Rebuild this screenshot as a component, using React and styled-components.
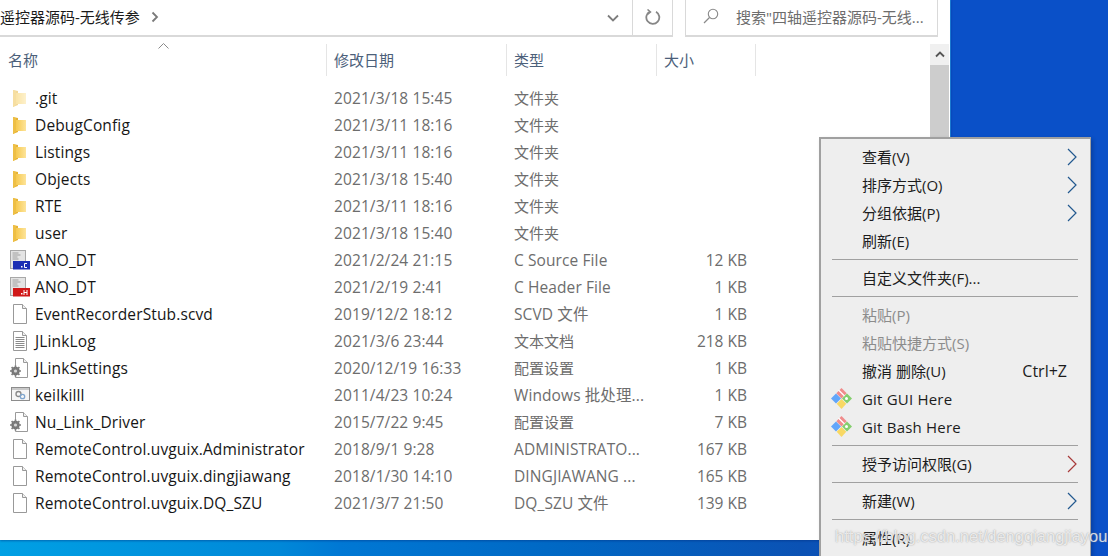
import React from "react";
import styled, { createGlobalStyle } from "styled-components";

const FONT = `"Open Sans", "Noto Sans CJK SC", sans-serif`;

const Global = createGlobalStyle`
  html, body { margin: 0; padding: 0; background: #0a50c8; overflow: hidden; }
  * { box-sizing: border-box; }
`;

const Desktop = styled.div`
  position: relative;
  width: 1108px;
  height: 556px;
  overflow: hidden;
  font-family: ${FONT};
  background: linear-gradient(90deg, #00a0e4 0, #0088d8 280px, #0078d4 340px, #0068c4 560px, #0b52b4 800px, #0a50c8 950px);
`;

const Explorer = styled.div`
  width: 951px;
  height: 540px;
  background: #fff;
  border-right: 1px solid #1a78d0;
  box-shadow: 0 1px 2px rgba(0, 40, 120, .45);
  display: flex;
  flex-direction: column;
  overflow: hidden;
`;

const AddressRow = styled.div`
  height: 37px;
  flex: none;
  display: flex;
  align-items: stretch;
`;

const AddressBox = styled.div`
  width: 673px;
  flex: none;
  display: flex;
  align-items: center;
  border-right: 1px solid #d9d9d9;
  border-bottom: 2px solid #d9d9d9;
`;

const Crumb = styled.div`
  font-size: 15px;
  color: #1a1a1a;
  white-space: nowrap;
  padding-bottom: 3px;
`;

const CrumbArrow = styled.svg`
  width: 8px;
  height: 12px;
  margin-left: 11px;
  margin-bottom: 2px;
`;

const Spacer = styled.div`
  flex: 1;
`;

const DropButton = styled.div`
  width: 40px;
  height: 100%;
  display: flex;
  align-items: center;
  justify-content: center;
  border-right: 1px solid #d9d9d9;
`;

const RefreshButton = styled.div`
  width: 39px;
  height: 100%;
  display: flex;
  align-items: center;
  justify-content: center;
`;

const SearchBox = styled.div`
  width: 253px;
  margin-left: 12px;
  flex: none;
  display: flex;
  align-items: center;
  border-left: 1px solid #d9d9d9;
  border-right: 1px solid #d9d9d9;
  border-bottom: 2px solid #d9d9d9;
  padding: 0 0 3px 17px;
  color: #6d6d6d;
  font-size: 15px;
  white-space: nowrap;
`;

const SearchText = styled.span`
  margin-left: 17px;
`;

const Body = styled.div`
  flex: 1;
  min-height: 0;
  display: flex;
  padding-top: 7px;
`;

const ListPane = styled.div`
  width: 930px;
  flex: none;
  position: relative;
`;

const HeaderRow = styled.div`
  display: grid;
  grid-template-columns: 327px 180px 150px 99px;
  height: 32px;
  margin-bottom: 8px;
`;

const HeaderCell = styled.div`
  font-size: 15px;
  color: #4c607a;
  padding-left: 7px;
  line-height: 32px;
  border-right: 1px solid #e5e5e5;
  &:first-child { padding-left: 8px; }
`;

const SortCaret = styled.svg`
  position: absolute;
  left: 158px;
  top: -1px;
  width: 11px;
  height: 6px;
`;

const FileRow = styled.div`
  display: grid;
  grid-template-columns: 327px 180px 150px 90px;
  height: 27px;
  align-items: center;
  font-size: 15.5px;
  white-space: nowrap;
`;

const NameCell = styled.div`
  display: flex;
  align-items: center;
  color: #161616;
  letter-spacing: .13px;
`;

const IconSlot = styled.div`
  width: 35px;
  flex: none;
  display: flex;
  justify-content: flex-start;
  padding-left: 10px;
  letter-spacing: 0;
`;

const MetaCell = styled.div`
  color: #6d6d6d;
  padding-left: 7px;
  font-size: ${p => (p.$cjk ? "15px" : "15.5px")};
  letter-spacing: ${p => (p.$cjk ? "0" : ".1px")};
  overflow: hidden;
`;

const SizeCell = styled.div`
  color: #6d6d6d;
  text-align: right;
  font-size: 15.5px;
`;

const ScrollTrack = styled.div`
  width: 19px;
  flex: none;
  background: #f0f0f0;
  display: flex;
  flex-direction: column;
`;

const ScrollUp = styled.div`
  height: 21px;
  display: flex;
  align-items: center;
  justify-content: center;
`;

const ScrollThumb = styled.div`
  flex: 1;
  background: #cdcdcd;
`;

const Menu = styled.div`
  position: absolute;
  left: 819px;
  top: 137px;
  width: 272px;
  height: 430px;
  background: #eeeeee;
  border: 2px solid #a0a0a0;
  border-right-width: 1px;
  padding-top: 4px;
  color: #1c1c1c;
  font-size: 15px;
  box-shadow: 2px 2px 4px rgba(0,0,0,.2);
`;

const MenuItem = styled.div`
  position: relative;
  height: 28px;
  display: flex;
  align-items: center;
  padding: 0 13px 2px 41px;
  color: ${p => (p.$disabled ? "#8c8c8c" : "#1c1c1c")};
  white-space: nowrap;
`;

const MenuIcon = styled.svg`
  position: absolute;
  left: 10px;
  top: 3px;
  width: 21px;
  height: 21px;
`;

const MenuLabel = styled.span`
  flex: 1;
  letter-spacing: ${p => (p.$latin ? ".2px" : "0")};
  padding-top: ${p => (p.$latin ? "2px" : "0")};
`;

const Shortcut = styled.span`
  padding-right: 10px;
  padding-top: 1px;
  font-size: 16px;
`;

const Chevron = styled.svg`
  width: 10px;
  height: 18px;
  margin-top: 2px;
`;

const MenuDivider = styled.div`
  height: 1px;
  background: #a0a0a0;
  margin: 4px 12px 4px 11px;
`;

const Watermark = styled.div`
  position: absolute;
  left: 835px;
  top: 527px;
  font-family: "Liberation Sans", sans-serif;
  font-size: 16.5px;
  color: rgba(255,255,255,.75);
  white-space: nowrap;
  text-shadow: 0 0 1.5px rgba(120,120,120,.8);
`;

function Folder({ faded }) {
  return (
    <svg width="13" height="18" viewBox="0 0 13 18" style={{ marginLeft: 3, opacity: faded ? 0.5 : 1 }}>
      <defs>
        <linearGradient id="folderFace" x1="0" x2="1" y1="0" y2="0">
          <stop offset="0" stopColor="#f6c94f" />
          <stop offset="1" stopColor="#fde49a" />
        </linearGradient>
      </defs>
      <path d="M0 1l5 1v14l-5 2z" fill="#e6b335" />
      <path d="M3 4h10v11H3z" fill="url(#folderFace)" />
      <path d="M0 1l3 1v14l-3 2z" fill="#eebf45" />
    </svg>
  );
}

function PageShape({ children }) {
  return (
    <svg width="17" height="20" viewBox="0 0 17 20">
      <path d="M3.500.5h9l4 4v15h-13z" fill="#fff" stroke="#999" />
      <path d="M12.500.5v4h4" fill="#f0f0f0" stroke="#999" />
      {children}
    </svg>
  );
}

const Blank = () => <PageShape />;

const TextDoc = () => (
  <PageShape>
    <path d="M5.500 6.500h9M5.500 8.500h9M5.500 10.500h9M5.500 12.500h9M5.500 14.500h9M5.500 16.500h9" stroke="#8a8a8a" strokeWidth="1" />
  </PageShape>
);

function Settings() {
  return (
    <svg width="18" height="20" viewBox="0 0 18 20">
      <path d="M5.500.5h8l4 4v15h-12z" fill="#fff" stroke="#9a9a9a" />
      <path d="M13.500.5v4h4" fill="#f0f0f0" stroke="#9a9a9a" />
      <circle cx="5.500" cy="13" r="4.200" fill="#6e6e6e" />
      <path d="M5.500 7.500v11M0 13h11M1.600 9.100l7.800 7.800M9.400 9.100l-7.800 7.800" stroke="#7d7d7d" strokeWidth="1.700" />
      <circle cx="5.500" cy="13" r="1.600" fill="#d8d8d8" />
    </svg>
  );
}

function Batch() {
  return (
    <svg width="19" height="15" viewBox="0 0 19 15" style={{ marginLeft: 1 }}>
      <rect x=".5" y=".5" width="18" height="13" fill="#f6f6f6" stroke="#8c8c8c" />
      <rect x="1" y="1" width="17" height="2" fill="#c9c9c9" />
      <circle cx="7.500" cy="7" r="2.500" fill="none" stroke="#888" strokeWidth="1.300" />
      <circle cx="11.500" cy="9.500" r="2.200" fill="none" stroke="#7fa6cf" strokeWidth="1.300" />
    </svg>
  );
}

function Source({ color, letter }) {
  return (
    <svg width="20" height="20" viewBox="0 0 20 20">
      <rect x=".5" y=".5" width="15" height="18" fill="#e4e4e4" stroke="#a8a8a8" />
      <path d="M2.500 3h6M2.500 5h8M2.500 7h5M2.500 9h6" stroke="#a0a0a0" strokeWidth="1" />
      <rect x="3" y="11" width="17" height="8.500" fill={color} />
      <rect x="11" y="16" width="1.500" height="1.500" fill="#fff" />
      <path d={letter === "C" ? "M17 13.500h-2.500v4H17" : "M14 13v5M17 13v5M14 15.500h3"} stroke="#fff" fill="none" strokeWidth="1" />
    </svg>
  );
}

const Git = () => (
  <MenuIcon viewBox="0 0 21 21">
    <path d="M10.500 0l5.200 5.200-5.200 5.200-5.200-5.200z" fill="#f08c8c" />
    <path d="M5 5.500l5 5-5 5L0 10.500z" fill="#62a6fa" />
    <path d="M16 5.500l5 5-5 5-5-5z" fill="#84cf6e" />
    <path d="M10.500 11l4.800 4.800-4.800 5.200-4.800-5.200z" fill="#f8d864" />
    <path d="M7.500 2l6 6" stroke="#fff" strokeWidth="1.300" />
    <circle cx="15.500" cy="10.500" r="1.500" fill="#fff" />
  </MenuIcon>
);

const ArrowRight = ({ color = "#22598f" }) => (
  <Chevron viewBox="0 0 10 18">
    <path d="M1 1l8 8-8 8" fill="none" stroke={color} strokeWidth="1.200" />
  </Chevron>
);

const files = [
  [<Folder faded />, ".git", "2021/3/18 15:45", "文件夹", ""],
  [<Folder />, "DebugConfig", "2021/3/11 18:16", "文件夹", ""],
  [<Folder />, "Listings", "2021/3/11 18:16", "文件夹", ""],
  [<Folder />, "Objects", "2021/3/18 15:40", "文件夹", ""],
  [<Folder />, "RTE", "2021/3/11 18:16", "文件夹", ""],
  [<Folder />, "user", "2021/3/18 15:40", "文件夹", ""],
  [<Source color="#1c2fb4" letter="C" />, "ANO_DT", "2021/2/24 21:15", "C Source File", "12 KB"],
  [<Source color="#d01818" letter="H" />, "ANO_DT", "2021/2/19 2:41", "C Header File", "1 KB"],
  [<Blank />, "EventRecorderStub.scvd", "2019/12/2 18:12", "SCVD 文件", "1 KB"],
  [<TextDoc />, "JLinkLog", "2021/3/6 23:44", "文本文档", "218 KB"],
  [<Settings />, "JLinkSettings", "2020/12/19 16:33", "配置设置", "1 KB"],
  [<Batch />, "keilkilll", "2011/4/23 10:24", "Windows 批处理...", "1 KB"],
  [<Settings />, "Nu_Link_Driver", "2015/7/22 9:45", "配置设置", "7 KB"],
  [<Blank />, "RemoteControl.uvguix.Administrator", "2018/9/1 9:28", "ADMINISTRATO...", "167 KB"],
  [<Blank />, "RemoteControl.uvguix.dingjiawang", "2018/1/30 14:10", "DINGJIAWANG ...", "165 KB"],
  [<Blank />, "RemoteControl.uvguix.DQ_SZU", "2021/3/7 21:50", "DQ_SZU 文件", "139 KB"],
];

const isCjkOnly = text => !/[A-Za-z0-9]/.test(text);

export default function App() {
  return (
    <Desktop>
      <Global />
      <Explorer>
        <AddressRow>
          <AddressBox>
            <Crumb>遥控器源码-无线传参</Crumb>
            <CrumbArrow viewBox="0 0 8 12">
              <path d="M1.500 1.500l4.500 4.500-4.500 4.500" fill="none" stroke="#7a7a7a" strokeWidth="1.800" />
            </CrumbArrow>
            <Spacer />
            <DropButton>
              <svg width="12" height="8" viewBox="0 0 12 8">
                <path d="M1 1.500l5 5 5-5" fill="none" stroke="#7d7d7d" strokeWidth="1.800" />
              </svg>
            </DropButton>
            <RefreshButton>
              <svg width="16" height="17" viewBox="0 0 16 17">
                <path d="M5 2.500a6.500 6.500 0 1 0 6 .2" fill="none" stroke="#868686" strokeWidth="1.800" />
                <path d="M2.500 .5l3 2.500-3 2.500" fill="none" stroke="#868686" strokeWidth="1.500" />
              </svg>
            </RefreshButton>
          </AddressBox>
          <SearchBox>
            <svg width="16" height="16" viewBox="0 0 16 16">
              <circle cx="10" cy="6" r="4.700" fill="none" stroke="#8a8a8a" strokeWidth="1.100" />
              <path d="M6.500 9.500L1 15" stroke="#8a8a8a" strokeWidth="1.200" />
            </svg>
            <SearchText>搜索"四轴遥控器源码-无线...</SearchText>
          </SearchBox>
        </AddressRow>
        <Body>
          <ListPane>
            <SortCaret viewBox="0 0 11 6">
              <path d="M.5 5.500l5-5 5 5" fill="none" stroke="#8a8a8a" />
            </SortCaret>
            <HeaderRow>
              <HeaderCell>名称</HeaderCell>
              <HeaderCell>修改日期</HeaderCell>
              <HeaderCell>类型</HeaderCell>
              <HeaderCell>大小</HeaderCell>
            </HeaderRow>
            {files.map(([icon, name, date, type, size], i) => (
              <FileRow key={i}>
                <NameCell>
                  <IconSlot>{icon}</IconSlot>
                  {name}
                </NameCell>
                <MetaCell>{date}</MetaCell>
                <MetaCell $cjk={isCjkOnly(type)}>{type}</MetaCell>
                <SizeCell>{size}</SizeCell>
              </FileRow>
            ))}
          </ListPane>
          <ScrollTrack>
            <ScrollUp>
              <svg width="10" height="7" viewBox="0 0 10 7">
                <path d="M1 5.500l4-4 4 4" fill="none" stroke="#555" strokeWidth="1.800" />
              </svg>
            </ScrollUp>
            <ScrollThumb />
          </ScrollTrack>
        </Body>
      </Explorer>
      <Menu>
        <MenuItem><MenuLabel>查看(V)</MenuLabel><ArrowRight /></MenuItem>
        <MenuItem><MenuLabel>排序方式(O)</MenuLabel><ArrowRight /></MenuItem>
        <MenuItem><MenuLabel>分组依据(P)</MenuLabel><ArrowRight /></MenuItem>
        <MenuItem><MenuLabel>刷新(E)</MenuLabel></MenuItem>
        <MenuDivider />
        <MenuItem><MenuLabel>自定义文件夹(F)...</MenuLabel></MenuItem>
        <MenuDivider />
        <MenuItem $disabled><MenuLabel>粘贴(P)</MenuLabel></MenuItem>
        <MenuItem $disabled><MenuLabel>粘贴快捷方式(S)</MenuLabel></MenuItem>
        <MenuItem><MenuLabel>撤消 删除(U)</MenuLabel><Shortcut>Ctrl+Z</Shortcut></MenuItem>
        <MenuItem><Git /><MenuLabel $latin>Git GUI Here</MenuLabel></MenuItem>
        <MenuItem><Git /><MenuLabel $latin>Git Bash Here</MenuLabel></MenuItem>
        <MenuDivider />
        <MenuItem><MenuLabel>授予访问权限(G)</MenuLabel><ArrowRight color="#a83a3a" /></MenuItem>
        <MenuDivider />
        <MenuItem><MenuLabel>新建(W)</MenuLabel><ArrowRight /></MenuItem>
        <MenuDivider />
        <MenuItem><MenuLabel>属性(R)</MenuLabel></MenuItem>
      </Menu>
      <Watermark>https://blog.csdn.net/dengqiangjiayou</Watermark>
    </Desktop>
  );
}
